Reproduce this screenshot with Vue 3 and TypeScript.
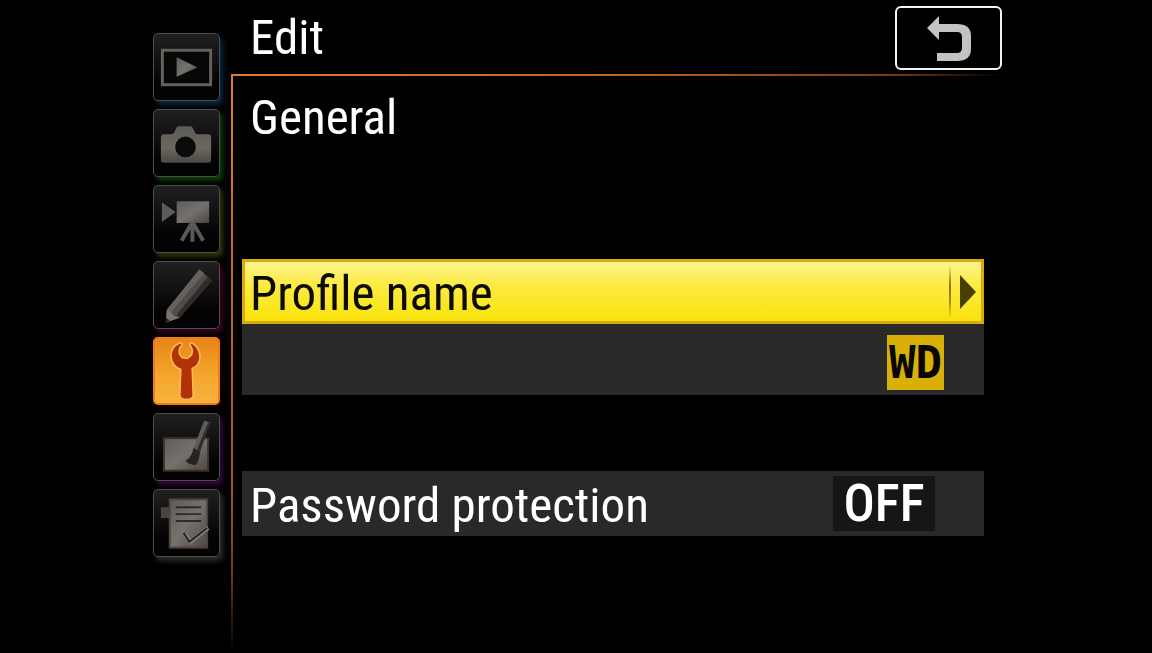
<script setup lang="ts">
import { ref } from 'vue'

interface Tab {
  id: string
  label: string
  glow: string
}

const tabs: Tab[] = [
  { id: 'playback', label: 'Playback menu', glow: '#06283c' },
  { id: 'photo', label: 'Photo shooting menu', glow: '#0a3d08' },
  { id: 'movie', label: 'Movie shooting menu', glow: '#2a3508' },
  { id: 'custom', label: 'Custom setting menu', glow: '#350520' },
  { id: 'setup', label: 'Setup menu', glow: '#0c0400' },
  { id: 'retouch', label: 'Retouch menu', glow: '#30063c' },
  { id: 'mymenu', label: 'My menu', glow: '#2c2c26' },
]

const active = ref('setup')
</script>

<template>
  <div class="screen">
    <svg class="defs" aria-hidden="true">
      <defs>
        <linearGradient id="metal" x1="0" y1="0" x2="1" y2="1">
          <stop offset="0" stop-color="#5c5b59" />
          <stop offset="0.5" stop-color="#75726e" />
          <stop offset="1" stop-color="#4b4641" />
        </linearGradient>
        <linearGradient id="body" x1="0" y1="0" x2="0" y2="1">
          <stop offset="0" stop-color="#5d5c5b" />
          <stop offset="0.6" stop-color="#6b665f" />
          <stop offset="1" stop-color="#4c4843" />
        </linearGradient>
      </defs>
    </svg>

    <nav class="tabs" aria-label="Menus">
      <button
        v-for="tab in tabs"
        :key="tab.id"
        type="button"
        class="tab"
        :class="{ active: tab.id === active }"
        :style="{ '--glow': tab.glow }"
        :aria-label="tab.label"
        @click="active = tab.id"
      >
        <svg v-if="tab.id === 'playback'" viewBox="1 1 66 66">
          <rect x="9.500" y="17" width="49" height="35" fill="#070707" stroke="#67615b" stroke-width="3" />
          <path d="M24 24 L45 34.500 L24 44 Z" fill="url(#metal)" />
        </svg>
        <svg v-else-if="tab.id === 'photo'" viewBox="1 1 66 66">
          <path d="M11 25 H19 Q22 24 23 20 Q24 17 26 17 H38 Q40 17 41 20 L43 24 Q44 25 46 25 H56 Q59 25 59 28 V51 Q59 54 56 54 H11 Q8 54 8 51 V28 Q8 25 11 25 Z" fill="url(#body)" />
          <circle cx="33" cy="38" r="10.500" fill="#0b0b0b" />
        </svg>
        <svg v-else-if="tab.id === 'movie'" viewBox="1 1 66 66">
          <path d="M9 17 L23 27 L9 37 Z" fill="#5b5b5b" />
          <rect x="24" y="16" width="33" height="22" fill="url(#metal)" />
          <path d="M40 37 L29 56 M40 37 V57 M40 37 L51 56" fill="none" stroke="#5c5855" stroke-width="4" />
        </svg>
        <svg v-else-if="tab.id === 'custom'" viewBox="1 1 66 66">
          <path d="M47 8 L60 19 L27 57 L13 62 L14 49 Z" fill="#514c48" />
          <path d="M47 8 L52 12 L18 52 L14 49 Z" fill="#65615e" />
          <path d="M56 15 L60 19 L27 57 L24 54 Z" fill="#302b28" />
          <path d="M14 49 L19 52 L21 55 L27 57 L13 62 Z" fill="#77746f" />
          <path d="M13 57 L17 60 L13 62 Z" fill="#29211d" />
        </svg>
        <svg v-else-if="tab.id === 'setup'" viewBox="2 2 64 64">
          <path d="M28 6 Q19 9 19 19 Q20 29 29 32 L28 58 Q28 62 34 62 Q40 62 40 58 L39 31 Q47 28 47 19 Q46 10 39 6 L38 7 Q42 12 40 18 L35 22 L29 21 L26 17 Q25 10 29 7 Z" fill="#ffc255" stroke="#fbbf55" stroke-width="3" stroke-linejoin="round" />
          <path d="M28 6 Q19 9 19 19 Q20 29 29 32 L28 58 Q28 62 34 62 Q40 62 40 58 L39 31 Q47 28 47 19 Q46 10 39 6 L38 7 Q42 12 40 18 L35 22 L29 21 L26 17 Q25 10 29 7 Z" fill="#b23208" />
        </svg>
        <svg v-else-if="tab.id === 'retouch'" viewBox="1 1 66 66">
          <rect x="11" y="25" width="45" height="33" fill="url(#metal)" stroke="#3d312a" stroke-width="2" />
          <path d="M52 7 L58 9 L48 38 L41 35 Z" fill="#605c57" />
          <path d="M56 9 L58 10 L48 38 L45 36 Z" fill="#302c28" />
          <path d="M41 35 L48 38 Q47 47 44 52 Q37 53 33 48 Q40 44 41 35 Z" fill="#272321" />
        </svg>
        <svg v-else viewBox="1 1 66 66">
          <path d="M8 18 H17 V29 H8 Z" fill="#4b4540" />
          <rect x="17" y="10" width="38" height="49" fill="url(#metal)" stroke="#51443d" stroke-width="2" />
          <path d="M23 18 H49 M23 25 H49 M23 32 H49" stroke="#302a26" stroke-width="2" />
          <path d="M32 45 L38 53 L56 39" fill="none" stroke="#8a8782" stroke-width="4" />
          <path d="M31 44 L37 53 L55 39" fill="none" stroke="#282420" stroke-width="2" />
        </svg>
      </button>
    </nav>

    <main class="panel">
      <header class="header">
        <h1>Edit</h1>
        <button type="button" class="back" aria-label="Back">
          <svg viewBox="0 0 44 46">
            <path d="M0 13 L12 1 V9 H30 Q44 9 44 21 V34 Q44 46 30 46 H10 V38 H30 Q35 38 35 33 V22 Q35 17 30 17 H12 V25 Z" fill="#c3c3c3" />
          </svg>
        </button>
      </header>

      <section class="content">
        <h2>General</h2>
        <button type="button" class="row selected">
          <span class="label">Profile name</span>
          <span class="next">
            <svg viewBox="0 0 16 34"><path d="M0 0 L16 17 L0 34 Z" fill="#453f00" /></svg>
          </span>
        </button>
        <div class="value"><span class="wd">WD</span></div>
        <button type="button" class="row password">
          <span class="label">Password protection</span>
          <span class="off">OFF</span>
        </button>
      </section>
    </main>
  </div>
</template>

<style>
body {
  margin: 0;
  background: #000;
}
</style>

<style scoped>
.screen {
  box-sizing: border-box;
  min-height: 100vh;
  padding: 0 150px 0 153px;
  display: grid;
  grid-template-columns: 67px minmax(0, 1fr);
  column-gap: 11px;
  background: #000;
  color: #fff;
  font-family: "Roboto Condensed", Roboto, sans-serif;
  overflow: hidden;
}
.defs {
  position: absolute;
  width: 0;
  height: 0;
}
button {
  margin: 0;
  padding: 0;
  font: inherit;
  color: inherit;
  border: 0;
}
.tabs {
  display: flex;
  flex-direction: column;
  gap: 8px;
  padding-top: 33px;
}
.tab {
  box-sizing: border-box;
  height: 68px;
  border: 1px solid #4e4e4e;
  border-radius: 5px;
  background: linear-gradient(#202020, #030303 75%);
  box-shadow: 3px 4px 5px var(--glow);
}
.tab svg {
  display: block;
  width: 100%;
  height: 100%;
}
.tab.active {
  border: 2px solid #f57a12;
  background: linear-gradient(#e98518, #f5a72e 60%, #f7b33f);
}
.panel {
  display: flex;
  flex-direction: column;
}
.header {
  box-sizing: border-box;
  display: flex;
  height: 74px;
  justify-content: space-between;
  align-items: center;
  padding: 2px 0 0 19px;
}
h1,
h2 {
  margin: 0;
  font-weight: 400;
  font-size: 49px;
  line-height: 64px;
}
.back {
  box-sizing: border-box;
  width: 107px;
  height: 64px;
  border: 2px solid #f4f4f4;
  border-radius: 6px;
  background: #000;
  display: grid;
  place-items: center;
}
.back svg {
  width: 44px;
  height: 46px;
}
.content {
  flex: 1;
  padding: 12px 18px 0 11px;
  background:
    linear-gradient(90deg, #e07c32, #c26424 50%, #7a3e12 85%, transparent) top / 100% 2px no-repeat,
    linear-gradient(#e07c32, #a8561f 70%, #7c3f15 85%, transparent) left / 2px 100% no-repeat;
}
h2 {
  padding-left: 8px;
}
.row {
  box-sizing: border-box;
  width: 100%;
  height: 65px;
  display: flex;
  justify-content: space-between;
  align-items: center;
  padding-left: 8px;
  font-size: 49px;
  line-height: 60px;
  background: #292929;
  white-space: nowrap;
}
.label {
  padding-top: 4px;
}
.selected {
  margin-top: 109px;
  padding-left: 5px;
  border: 3px solid #d8aa12;
  background: linear-gradient(#fff38b, #fbeb42 40%, #f9e30c);
  color: #0c0b00;
}
.next {
  width: 32px;
  height: 54px;
  box-sizing: border-box;
  padding-left: 5px;
  display: grid;
  place-items: center;
  background: linear-gradient(transparent, #9b6b08 40%, #b98a08 70%, transparent) left / 2px 100% no-repeat;
}
.next svg {
  width: 16px;
  height: 34px;
}
.value {
  height: 71px;
  box-sizing: border-box;
  padding: 5px 40px 0 8px;
  display: flex;
  justify-content: flex-end;
  align-items: center;
  background: #292929;
}
.wd,
.off {
  height: 55px;
  display: grid;
  place-items: center;
  line-height: 55px;
}
.wd {
  width: 57px;
  background: #d8b008;
  color: #080700;
  font-family: "DejaVu Sans Mono", monospace;
  font-size: 44px;
  font-weight: 700;
}
.password {
  margin-top: 76px;
  padding-right: 49px;
}
.off {
  width: 102px;
  background: #161616;
  font-size: 52px;
  font-weight: 500;
}
</style>
